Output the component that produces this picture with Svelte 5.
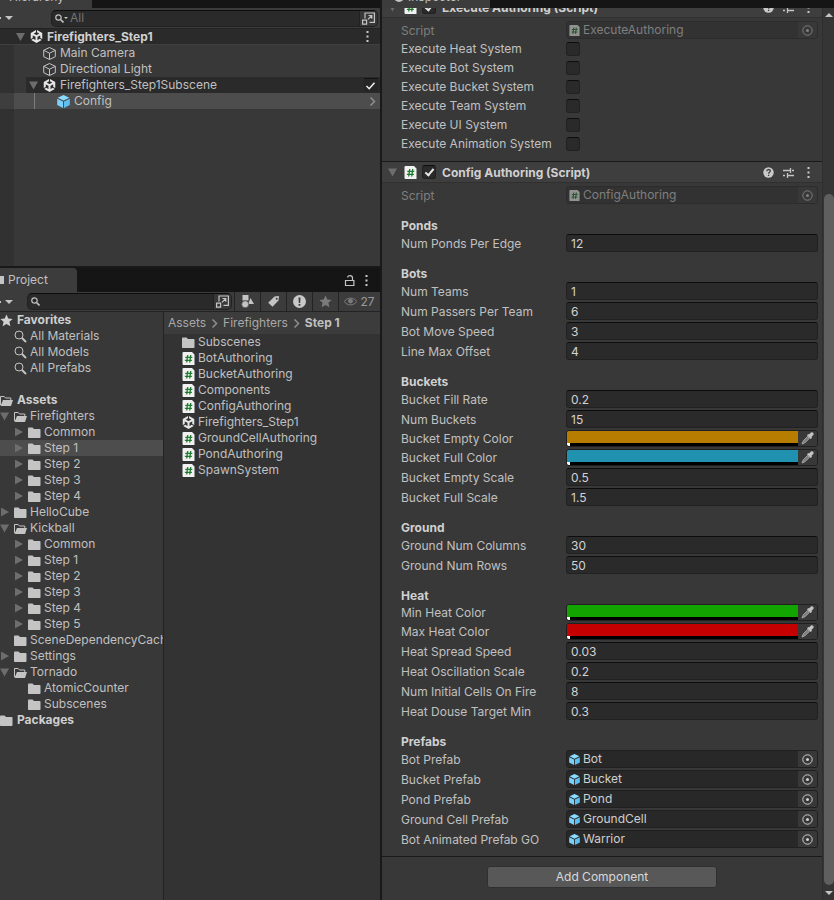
<script lang="ts">
  type Kind = 'number' | 'color' | 'object';
  type Field = { label: string; kind: Kind; value: string };
  type Group = { title: string; fields: Field[] };
  type Node = { name: string; depth: number; icon: string; fold?: 'open' | 'closed' };

  const systems = ['Heat', 'Bot', 'Bucket', 'Team', 'UI', 'Animation'];

  const num = (label: string, value: string): Field => ({ label, kind: 'number', value });
  const color = (label: string, value: string): Field => ({ label, kind: 'color', value });
  const prefab = (label: string, value: string): Field => ({ label, kind: 'object', value });

  const groups: Group[] = [
    { title: 'Ponds', fields: [num('Num Ponds Per Edge', '12')] },
    {
      title: 'Bots',
      fields: [
        num('Num Teams', '1'),
        num('Num Passers Per Team', '6'),
        num('Bot Move Speed', '3'),
        num('Line Max Offset', '4'),
      ],
    },
    {
      title: 'Buckets',
      fields: [
        num('Bucket Fill Rate', '0.2'),
        num('Num Buckets', '15'),
        color('Bucket Empty Color', '#b67d00'),
        color('Bucket Full Color', '#2191b0'),
        num('Bucket Empty Scale', '0.5'),
        num('Bucket Full Scale', '1.5'),
      ],
    },
    {
      title: 'Ground',
      fields: [num('Ground Num Columns', '30'), num('Ground Num Rows', '50')],
    },
    {
      title: 'Heat',
      fields: [
        color('Min Heat Color', '#12a500'),
        color('Max Heat Color', '#c40000'),
        num('Heat Spread Speed', '0.03'),
        num('Heat Oscillation Scale', '0.2'),
        num('Num Initial Cells On Fire', '8'),
        num('Heat Douse Target Min', '0.3'),
      ],
    },
    {
      title: 'Prefabs',
      fields: [
        prefab('Bot Prefab', 'Bot'),
        prefab('Bucket Prefab', 'Bucket'),
        prefab('Pond Prefab', 'Pond'),
        prefab('Ground Cell Prefab', 'GroundCell'),
        prefab('Bot Animated Prefab GO', 'Warrior'),
      ],
    },
  ];

  const favorites = ['All Materials', 'All Models', 'All Prefabs'];

  const folders: Node[] = [
    { name: 'Assets', depth: 0, icon: 'open' },
    { name: 'Firefighters', depth: 1, icon: 'open', fold: 'open' },
    { name: 'Common', depth: 2, icon: 'folder', fold: 'closed' },
    { name: 'Step 1', depth: 2, icon: 'folder', fold: 'closed' },
    { name: 'Step 2', depth: 2, icon: 'folder', fold: 'closed' },
    { name: 'Step 3', depth: 2, icon: 'folder', fold: 'closed' },
    { name: 'Step 4', depth: 2, icon: 'folder', fold: 'closed' },
    { name: 'HelloCube', depth: 1, icon: 'folder', fold: 'closed' },
    { name: 'Kickball', depth: 1, icon: 'open', fold: 'open' },
    { name: 'Common', depth: 2, icon: 'folder', fold: 'closed' },
    { name: 'Step 1', depth: 2, icon: 'folder', fold: 'closed' },
    { name: 'Step 2', depth: 2, icon: 'folder', fold: 'closed' },
    { name: 'Step 3', depth: 2, icon: 'folder', fold: 'closed' },
    { name: 'Step 4', depth: 2, icon: 'folder', fold: 'closed' },
    { name: 'Step 5', depth: 2, icon: 'folder', fold: 'closed' },
    { name: 'SceneDependencyCache', depth: 1, icon: 'folder' },
    { name: 'Settings', depth: 1, icon: 'folder', fold: 'closed' },
    { name: 'Tornado', depth: 1, icon: 'open', fold: 'open' },
    { name: 'AtomicCounter', depth: 2, icon: 'folder' },
    { name: 'Subscenes', depth: 2, icon: 'folder' },
    { name: 'Packages', depth: 0, icon: 'folder' },
  ];

  const files = [
    { name: 'Subscenes', icon: 'folder' },
    { name: 'BotAuthoring', icon: 'script' },
    { name: 'BucketAuthoring', icon: 'script' },
    { name: 'Components', icon: 'script' },
    { name: 'ConfigAuthoring', icon: 'script' },
    { name: 'Firefighters_Step1', icon: 'unity' },
    { name: 'GroundCellAuthoring', icon: 'script' },
    { name: 'PondAuthoring', icon: 'script' },
    { name: 'SpawnSystem', icon: 'script' },
  ];

  let selected = $state(3);

  const idOf = (label: string) => label.toLowerCase().replaceAll(' ', '-');
</script>

{#snippet icon(name: string)}
  {#if name === 'unity'}
    <svg class="icon" viewBox="0 0 24 24" fill="#e6e6e6">
      <path d="m12.93 4.29 3.8 2.2c.14.07.14.29 0 .36l-4.52 2.61a.42.42 0 0 1-.42 0L7.27 6.85c-.14-.07-.14-.29 0-.36l3.8-2.2V0L1.38 5.6v11.19l3.71-2.14v-4.39c0-.16.18-.27.32-.18l4.52 2.6c.13.08.21.22.21.37v5.22c0 .15-.18.26-.32.18l-3.8-2.2-3.71 2.15L12 24l9.7-5.6-3.72-2.15-3.8 2.2c-.13.08-.32-.03-.32-.18v-5.22c0-.15.09-.29.22-.37l4.51-2.6c.14-.08.32.02.32.18v4.39l3.72 2.14V5.6L12.93 0Z" />
    </svg>
  {:else if name === 'cube'}
    <svg class="icon" viewBox="0 0 13 13" fill="none" stroke="#c4c4c4">
      <path d="M6.500.5 12.300 3.300v6.400L6.500 12.500.7 9.700V3.300zM.7 3.300l5.800 2.900 5.800-2.900M6.500 6.200v6.300" />
    </svg>
  {:else if name === 'prefab'}
    <svg class="icon" viewBox="0 0 13 13">
      <path fill="#8adcff" d="M6.500 0 12.300 2.800 6.500 5.500.7 2.800z" />
      <path fill="#7bd0fb" d="M.2 3.700 6 6.400V13L.2 10.100z" />
      <path fill="#5fc0ef" d="M12.800 3.700 7 6.400V13l5.800-2.900z" />
    </svg>
  {:else if name === 'script'}
    <svg class="icon" viewBox="0 0 13 13">
      <path fill="#f1f1f1" d="M1.500 0H10l2.500 2.500V13H1.500a1 1 0 0 1-1-1V1a1 1 0 0 1 1-1z" />
      <path stroke="#1c7a2c" stroke-width="1.300" d="M5.700 3 4.700 10.500M8.700 3l-1 7.500M3.300 5.300h7M2.900 8.300h7" />
    </svg>
  {:else if name === 'folder'}
    <svg class="icon" viewBox="0 0 13 13" fill="#c4c4c4">
      <path d="M0 2.500C0 2 .4 1.500 1 1.500h3.500L6 3h5.500c.6 0 1 .4 1 1v7c0 .6-.4 1-1 1H1c-.6 0-1-.4-1-1z" />
    </svg>
  {:else if name === 'open'}
    <svg class="icon" viewBox="0 0 13 13">
      <path fill="none" stroke="#c4c4c4" d="M.5 11V2.500h3.700L5.500 4h5.300v2" />
      <path fill="#c4c4c4" d="M3 6h10l-2 6H.5z" />
    </svg>
  {:else if name === 'search'}
    <svg class="icon" viewBox="0 0 13 13" fill="none" stroke="#c4c4c4">
      <circle cx="5" cy="5" r="4" />
      <path stroke-width="2" d="m8 8 4 4" />
    </svg>
  {:else if name === 'search-small'}
    <svg class="icon small-icon" viewBox="0 0 9 9" fill="none" stroke="#c4c4c4" stroke-width="1.200">
      <circle cx="3.500" cy="3.500" r="2.700" />
      <path stroke-width="1.600" d="m5.500 5.500 3 3" />
    </svg>
  {:else if name === 'star'}
    <svg class="icon" viewBox="0 0 13 13" fill="currentColor">
      <path d="m6.500.5 1.800 4 4.400.4-3.300 2.900 1 4.400-3.900-2.300-3.900 2.300 1-4.400L.3 4.900l4.400-.4z" />
    </svg>
  {:else if name === 'popout'}
    <svg class="icon" viewBox="0 0 13 13" fill="none" stroke="#c4c4c4" stroke-width="1.200">
      <path d="M3 6.500V1h9.400v9.400H7.500M.6 8.200h4v4h-4zM6 7.300l3.800-3.800M6.500 3.500h3.300v3.300" />
    </svg>
  {:else if name === 'shapes'}
    <svg class="icon" viewBox="0 0 13 13" fill="#c4c4c4">
      <path d="M1.500 0h6v5.500h-6zM9.500 3l3.500 6H7z" />
      <circle cx="4.200" cy="9.300" r="3.500" stroke="#3c3c3c" stroke-width=".6" />
    </svg>
  {:else if name === 'tag'}
    <svg class="icon" viewBox="0 0 13 13" fill="#c4c4c4">
      <path fill-rule="evenodd" d="M7.500 1.500 11.500 1l.5.500-.5 4-6 6.200L1.200 7.700zM9.700 2.700a1 1 0 1 0 0 2 1 1 0 0 0 0-2z" />
    </svg>
  {:else if name === 'alert'}
    <svg class="icon" viewBox="0 0 13 13">
      <circle cx="6.500" cy="6.500" r="6.500" fill="#c9c9c9" />
      <path fill="#3c3c3c" d="M5.500 2.500h2L7.200 8H5.800zM5.600 9h1.800v1.700H5.600z" />
    </svg>
  {:else if name === 'eye'}
    <svg class="icon" viewBox="0 0 13 13" fill="none" stroke="#7b7b7b">
      <path d="M.3 6.500C3 2 10 2 12.700 6.500 10 11 3 11 .3 6.500z" />
      <circle cx="6.500" cy="6" r="2" fill="#7b7b7b" />
    </svg>
  {:else if name === 'lock'}
    <svg class="icon" viewBox="0 0 13 13" fill="none" stroke="#c4c4c4" stroke-width="1.200">
      <path d="M2.500 6.500h8.400v5H2.500zM9.500 6.500V4c0-3-4.800-3-4.800-.5" />
    </svg>
  {:else if name === 'more'}
    <svg class="icon" viewBox="0 0 13 13" fill="#c9c9c9">
      <path d="M5.500 1h2v2h-2zM5.500 5.500h2v2h-2zM5.500 10h2v2h-2z" />
    </svg>
  {:else if name === 'help'}
    <svg class="icon" viewBox="0 0 13 13">
      <circle cx="6.500" cy="6.500" r="5.200" fill="#c9c9c9" />
      <path fill="none" stroke="#3c3c3c" stroke-width="1.300" d="M4.800 5.200c0-2.200 3.500-2.200 3.500-.2 0 1.200-1.700 1.200-1.700 2.700M6.600 8.700v1.400" />
    </svg>
  {:else if name === 'sliders'}
    <svg class="icon" viewBox="0 0 13 13" fill="none" stroke="#c4c4c4" stroke-width="1.300">
      <path d="M1 4.500h7M8.500 2v5M10 4.500h2M1 9.500h2M5.500 7v5M6 9.500h6" />
    </svg>
  {:else if name === 'picker'}
    <svg class="icon" viewBox="0 0 13 13" fill="none" stroke="currentColor">
      <circle cx="6.500" cy="6.500" r="4.700" />
      <circle cx="6.500" cy="6.500" r="1.500" fill="currentColor" stroke="none" />
    </svg>
  {:else if name === 'dropper'}
    <svg class="icon" viewBox="0 0 13 13">
      <path fill="#c4c4c4" d="M8 2.500 10 .6c1.600-1 3.400.9 2.300 2.400l-1.900 1.900.7.800-1.400 1.300L6 3.300 7.300 2z" />
      <path fill="#7d7d7d" stroke="#b4b4b4" stroke-width=".8" d="M6.500 4.500 2.200 8.900 1 12l3-1.300 4.400-4.300z" />
    </svg>
  {:else if name === 'chevron'}
    <svg class="icon" viewBox="0 0 13 13" fill="none" stroke="#8f8f8f" stroke-width="1.500">
      <path d="m4.500 2.500 4 4-4 4" />
    </svg>
  {:else if name === 'check'}
    <svg class="icon" viewBox="0 0 13 13" fill="none" stroke="#eee" stroke-width="1.600">
      <path d="m2.500 7 2.700 2.700 5.300-6" />
    </svg>
  {/if}
{/snippet}

{#snippet fold(state: string | undefined)}
  <span class="fold {state ?? ''}"></span>
{/snippet}

{#snippet scriptRow(name: string)}
  <div class="field disabled">
    <span class="label">Script</span>
    <div class="object">
      <span class="object-name">{@render icon('script')}{name}</span>
      <button class="pick" disabled aria-label="Select script">{@render icon('picker')}</button>
    </div>
  </div>
{/snippet}

{#snippet componentHeader(title: string)}
  <header class="component-header">
    {@render fold('open')}
    {@render icon('script')}
    <input type="checkbox" class="check" id={idOf(title)} checked />
    <label class="component-title" for={idOf(title)}>{title}</label>
    <button class="tool" aria-label="Help">{@render icon('help')}</button>
    <button class="tool" aria-label="Presets">{@render icon('sliders')}</button>
    <button class="tool" aria-label="More">{@render icon('more')}</button>
  </header>
{/snippet}

<div class="editor">
  <div class="left">
    <section class="hierarchy">
      <div class="tabs clipped"><div class="tab hierarchy-tab">Hierarchy</div></div>
      <div class="toolbar hierarchy-toolbar">
        <button class="create" aria-label="Create"><span class="caret"></span></button>
        <div class="search hierarchy-search">
          {@render icon('search-small')}
          <span class="caret small"></span>
          <input type="text" placeholder="All" aria-label="Search hierarchy" />
          <button class="popout" aria-label="Open in search">{@render icon('popout')}</button>
        </div>
      </div>
      <div class="scene">
        {@render fold('open')}
        {@render icon('unity')}
        <strong>Firefighters_Step1</strong>
        <button class="tool" aria-label="Scene menu">{@render icon('more')}</button>
      </div>
      <div class="objects">
        <div class="object-row leaf">{@render icon('cube')}Main Camera</div>
        <div class="object-row leaf">{@render icon('cube')}Directional Light</div>
        <div class="object-row subscene">
          {@render fold('open')}
          {@render icon('unity')}
          <span class="grow">Firefighters_Step1Subscene</span>
          <span class="loaded">{@render icon('check')}</span>
        </div>
        <div class="object-row config">
          <span class="guide"></span>
          {@render icon('prefab')}
          <span class="grow">Config</span>
          {@render icon('chevron')}
        </div>
      </div>
    </section>

    <section class="project">
      <div class="tabs">
        <div class="tab project-tab"><span class="tab-mark"></span>Project</div>
        <div class="tab-tools">
          <button class="tool" aria-label="Lock">{@render icon('lock')}</button>
          <button class="tool" aria-label="Project menu">{@render icon('more')}</button>
        </div>
      </div>
      <div class="toolbar">
        <button class="create" aria-label="Create"><span class="caret"></span></button>
        <div class="search">
          {@render icon('search-small')}
          <input type="text" aria-label="Search project" />
          <button class="popout" aria-label="Open in search">{@render icon('popout')}</button>
        </div>
        <button class="filter" aria-label="Filter by type">{@render icon('shapes')}</button>
        <button class="filter" aria-label="Filter by label">{@render icon('tag')}</button>
        <button class="filter" aria-label="Filter by log">{@render icon('alert')}</button>
        <button class="filter dim" aria-label="Save search">{@render icon('star')}</button>
        <button class="filter hidden-count">{@render icon('eye')}27</button>
      </div>
      <div class="browser">
        <nav class="tree">
          <div class="tree-row top">{@render icon('star')}Favorites</div>
          {#each favorites as name}
            <button class="tree-row favorite">{@render icon('search')}{name}</button>
          {/each}
          <div class="spacer"></div>
          {#each folders as node, i}
            <button
              class="tree-row"
              class:top={node.depth === 0}
              class:selected={selected === i}
              style:padding-left="{Math.max(node.depth - 1, 0) * 14}px"
              onclick={() => (selected = i)}
            >
              {#if node.depth > 0}{@render fold(node.fold)}{/if}
              {@render icon(node.icon)}
              {node.name}
            </button>
          {/each}
        </nav>
        <div class="contents">
          <div class="breadcrumb">
            <a href="#assets">Assets</a>
            {@render icon('chevron')}
            <a href="#firefighters">Firefighters</a>
            {@render icon('chevron')}
            <strong>Step 1</strong>
          </div>
          <ul class="files">
            {#each files as file}
              <li>{@render icon(file.icon)}{file.name}</li>
            {/each}
          </ul>
        </div>
      </div>
    </section>
  </div>

  <section class="inspector">
    <div class="tabs clipped">
      <div class="tab inspector-tab"><span class="dot"></span>Inspector</div>
    </div>
    <div class="inspector-body">
      <div class="components">
        <!-- scrolled partly under the tab bar -->
        <section class="component scrolled">
          {@render componentHeader('Execute Authoring (Script)')}
          <div class="fields toggles">
            {@render scriptRow('ExecuteAuthoring')}
            {#each systems as name}
              <div class="field toggle">
                <label class="label" for={idOf(name)}>Execute {name} System</label>
                <input type="checkbox" class="check" id={idOf(name)} />
              </div>
            {/each}
          </div>
        </section>

        <section class="component">
          {@render componentHeader('Config Authoring (Script)')}
          <div class="fields">
            {@render scriptRow('ConfigAuthoring')}
          </div>
          {#each groups as group}
            <h3>{group.title}</h3>
            <div class="fields">
              {#each group.fields as f}
                <div class="field">
                  <label class="label" for={idOf(f.label)}>{f.label}</label>
                  {#if f.kind === 'number'}
                    <input type="text" class="number" id={idOf(f.label)} value={f.value} />
                  {:else if f.kind === 'color'}
                    <div class="color">
                      <div class="swatch">
                        <input type="color" id={idOf(f.label)} value={f.value} />
                        <span class="alpha"></span>
                      </div>
                      <button class="pick" aria-label="Pick color">{@render icon('dropper')}</button>
                    </div>
                  {:else}
                    <div class="object">
                      <button class="object-name" id={idOf(f.label)}>{@render icon('prefab')}{f.value}</button>
                      <button class="pick" aria-label="Select object">{@render icon('picker')}</button>
                    </div>
                  {/if}
                </div>
              {/each}
            </div>
          {/each}
        </section>

        <div class="footer">
          <button class="add">Add Component</button>
        </div>
      </div>
      <div class="scrollbar">
        <span class="arrow up"></span>
        <span class="thumb"></span>
        <span class="arrow down"></span>
      </div>
    </div>
  </section>
</div>

<style>
  :global(body) {
    background: #191919;
  }

  .editor {
    display: grid;
    grid-template-columns: minmax(0, 380fr) minmax(0, 452fr);
    gap: 2px;
    min-height: 100vh;
    background: #191919;
    color: #c0c0c0;
    font-family: Inter, 'Liberation Sans', sans-serif;
    font-size: 12px;
    line-height: 16px;
    white-space: nowrap;
  }

  .editor * {
    box-sizing: border-box;
  }

  button,
  input {
    margin: 0;
    padding: 0;
    border: none;
    background: none;
    color: inherit;
    font: inherit;
    min-width: 0;
  }

  .icon {
    display: block;
    width: 13px;
    height: 13px;
    flex-shrink: 0;
  }

  .small-icon {
    width: 9px;
    height: 9px;
  }

  .left {
    display: grid;
    grid-template-rows: 266fr 632fr;
    gap: 2px;
  }

  .hierarchy,
  .project,
  .inspector {
    display: flex;
    flex-direction: column;
    min-width: 0;
    background: #383838;
  }

  /* tabs */
  .tabs {
    display: flex;
    justify-content: space-between;
    height: 24px;
    background: #151515;
  }

  .tabs.clipped {
    height: 8px;
    align-items: flex-end;
    overflow: hidden;
  }

  .tab {
    display: flex;
    align-items: center;
    gap: 4px;
    background: #3c3c3c;
    border-top-right-radius: 4px;
  }

  .clipped .tab {
    height: 22px;
    flex-shrink: 0;
  }

  .hierarchy-tab {
    width: 92px;
    padding-left: 9px;
  }

  .project-tab {
    width: 77px;
  }

  .inspector-tab {
    width: 108px;
    padding-left: 12px;
  }

  .tab-mark {
    width: 4px;
    height: 8px;
    background: #c4c4c4;
  }

  .dot {
    width: 10px;
    height: 10px;
    border-radius: 50%;
    background: #c4c4c4;
  }

  .tab-tools {
    display: flex;
    align-items: center;
    gap: 4px;
    padding-right: 7px;
  }

  .toolbar {
    display: flex;
    align-items: center;
    height: 20px;
    background: #3c3c3c;
    border-bottom: 1px solid #232323;
  }

  .hierarchy-toolbar {
    height: 21px;
  }

  .create {
    display: flex;
    align-items: center;
    gap: 4px;
    width: 27px;
    flex-shrink: 0;
  }

  /* the plus sign runs off the window's edge */
  .create::before {
    content: '';
    width: 1px;
    height: 2px;
    background: #c4c4c4;
  }

  .caret {
    width: 8px;
    border: 4px solid transparent;
    border-top-color: #c4c4c4;
    border-bottom: none;
  }

  .caret.small {
    width: 4px;
    border-width: 2px;
    border-bottom: none;
  }

  .search {
    display: flex;
    align-items: center;
    flex: 1;
    height: 17px;
    margin-right: 2px;
    padding-left: 3px;
    background: #2a2a2a;
    border: 1px solid #212121;
    border-top-color: #0d0d0d;
    border-radius: 5px;
  }

  .hierarchy-search {
    margin-left: 24px;
  }

  .search input {
    flex: 1;
    width: 0;
    padding-left: 2px;
    outline: none;
  }

  .search input::placeholder {
    color: #747474;
    opacity: 1;
  }

  .popout {
    display: flex;
    align-items: center;
    justify-content: center;
    width: 18px;
    height: 15px;
    background: #383838;
    border-left: 1px solid #212121;
    border-radius: 0 4px 4px 0;
  }

  .filter {
    display: flex;
    align-items: center;
    justify-content: center;
    width: 26px;
    height: 19px;
    flex-shrink: 0;
    border-left: 1px solid #232323;
  }

  .filter.dim {
    color: #7b7b7b;
  }

  .filter.hidden-count {
    width: 42px;
    gap: 3px;
    color: #9a9a9a;
  }

  /* fold arrows */
  .fold {
    width: 10px;
    height: 9px;
    flex-shrink: 0;
  }

  .fold.open {
    background: #6d6d6d;
    clip-path: polygon(0 10%, 90% 10%, 45% 100%);
  }

  .fold.closed {
    background: #6d6d6d;
    clip-path: polygon(10% 0, 90% 50%, 10% 100%);
  }

  /* hierarchy */
  .scene {
    display: flex;
    align-items: center;
    gap: 4px;
    height: 16px;
    padding: 0 6px 0 16px;
    background: #2a2a2a;
    border-bottom: 1px solid #404040;
  }

  .scene strong {
    flex: 1;
    color: #d0d0d0;
  }

  strong,
  h3,
  .top,
  .component-title {
    font-weight: 700;
  }

  .objects {
    flex: 1;
    background: linear-gradient(to right, #313131 14px, #383838 14px);
  }

  .object-row {
    display: flex;
    align-items: center;
    gap: 4px;
    height: 16px;
  }

  .leaf {
    padding-left: 43px;
  }

  .subscene {
    margin-left: 26px;
    padding-left: 3px;
    background: #2a2a2a;
  }

  .config {
    padding-right: 1px;
    background: linear-gradient(to right, #3e3e3e 14px, #4d4d4d 14px);
  }

  .guide {
    width: 19px;
    height: 16px;
    margin-left: 34px;
    border-left: 1px solid #7d7d7d;
  }

  .grow {
    flex: 1;
  }

  .loaded {
    width: 14px;
    margin-right: 2px;
    border-top: 1px solid #111;
    background: #262626;
  }

  /* project */
  .browser {
    display: grid;
    grid-template-columns: 164px minmax(0, 1fr);
    flex: 1;
  }

  .tree {
    overflow: hidden;
    border-right: 1px solid #232323;
  }

  .tree-row {
    display: flex;
    align-items: center;
    gap: 3px;
    width: 100%;
    height: 16px;
    text-align: left;
  }

  .tree :global(.fold) {
    margin-right: 1px;
  }

  .favorite {
    padding-left: 14px;
  }

  .top {
    gap: 4px;
    color: #cfcfcf;
  }

  .spacer {
    height: 16px;
  }

  .selected {
    background: #4d4d4d;
  }

  .contents {
    background: #333;
  }

  .breadcrumb {
    display: flex;
    align-items: center;
    gap: 2px;
    height: 22px;
    padding-left: 4px;
    background: #3c3c3c;
  }

  .breadcrumb a {
    color: #a8a8a8;
    text-decoration: none;
  }

  .files {
    margin: 0;
    padding: 0 0 0 18px;
    list-style: none;
  }

  .files li {
    display: flex;
    align-items: center;
    gap: 3px;
    height: 16px;
  }

  /* inspector */
  .inspector-body {
    display: flex;
    flex: 1;
    overflow: hidden;
  }

  .components {
    flex: 1;
    min-width: 0;
  }

  .component {
    padding-bottom: 8px;
    border-top: 1px solid #1a1a1a;
  }

  .scrolled {
    margin-top: -12px;
  }

  .component-header {
    display: flex;
    align-items: center;
    height: 21px;
    padding: 0 7px 0 6px;
    background: #3e3e3e;
    border-bottom: 1px solid #303030;
    margin-bottom: 3px;
  }

  .component-header > .check {
    margin-left: 5px;
  }

  .component-header > :global(.fold) {
    margin-right: 6px;
  }

  .component-title {
    flex: 1;
    padding: 1px 0 0 6px;
    line-height: 17px;
    color: #d0d0d0;
  }

  .component-header .tool {
    margin-left: 7px;
  }

  .fields {
    display: flex;
    flex-direction: column;
    gap: 2px;
    padding: 0 4px 0 19px;
  }

  .fields.toggles {
    gap: 0;
  }

  h3 {
    margin: 12px 0 0 19px;
    padding-top: 1px;
    font-size: 12px;
    line-height: 17px;
    color: #d0d0d0;
  }

  .field {
    display: grid;
    grid-template-columns: minmax(0, 165fr) minmax(0, 252fr);
    align-items: center;
  }

  .label {
    padding-top: 1px;
  }

  .toggle {
    height: 19px;
  }

  .toggle .label {
    padding-top: 0;
  }

  .check {
    display: flex;
    justify-content: center;
    appearance: none;
    width: 14px;
    height: 14px;
    background: #2a2a2a;
    border: 1px solid #212121;
    border-top-color: #0d0d0d;
    border-radius: 3px;
  }

  .check:checked::before {
    content: '';
    box-sizing: border-box;
    width: 5px;
    height: 9px;
    margin-top: 1px;
    border: solid #e6e6e6;
    border-width: 0 2px 2px 0;
    transform: rotate(40deg);
  }

  .number {
    width: 100%;
    height: 18px;
    padding: 0 4px;
    background: #2a2a2a;
    border: 1px solid #212121;
    border-top-color: #0d0d0d;
    border-radius: 3px;
    color: #d2d2d2;
  }

  .color,
  .object {
    display: flex;
    overflow: hidden;
    border: 1px solid #202020;
    border-radius: 3px;
  }

  .color {
    height: 17px;
  }

  .object {
    height: 18px;
    background: #282828;
    color: #cfcfcf;
  }

  .swatch {
    display: flex;
    flex-direction: column;
    flex: 1;
  }

  .swatch input {
    appearance: none;
    width: 100%;
    height: 12px;
  }

  .swatch input::-webkit-color-swatch-wrapper {
    padding: 0;
  }

  .swatch input::-webkit-color-swatch {
    border: none;
    border-radius: 0;
  }

  .alpha {
    height: 3px;
    background: linear-gradient(to right, #fff 3px, #000 3px);
  }

  .pick {
    display: flex;
    align-items: center;
    justify-content: center;
    width: 19px;
    background: #383838;
  }

  .object-name {
    display: flex;
    align-items: center;
    gap: 3px;
    flex: 1;
    padding-left: 2px;
  }

  .object-name :global(.icon) {
    width: 11px;
    height: 11px;
  }

  .disabled .label,
  .disabled .object {
    color: #7f7f7f;
  }

  .disabled .object {
    background: #323232;
    border-color: #2c2c2c;
  }

  .disabled .object-name :global(.icon) {
    opacity: 0.5;
  }

  .footer {
    display: flex;
    justify-content: center;
    padding: 9px 0 12px;
    border-top: 1px solid #1a1a1a;
  }

  .add {
    width: 230px;
    height: 22px;
    background: #585858;
    border: 1px solid #303030;
    border-radius: 3px;
    color: #d8d8d8;
  }

  .scrollbar {
    display: flex;
    flex-direction: column;
    align-items: center;
    justify-content: space-between;
    width: 12px;
    padding: 5px 0;
    background: #353535;
    border-left: 1px solid #2e2e2e;
  }

  .thumb {
    flex: 1;
    width: 10px;
    margin: 177px 0 6px;
    background: #5f5f5f;
    border-radius: 5px;
  }

  .arrow {
    border: 4px solid transparent;
  }

  .up {
    border-top: none;
    border-bottom-color: #c4c4c4;
  }

  .down {
    border-bottom: none;
    border-top-color: #c4c4c4;
  }
</style>
